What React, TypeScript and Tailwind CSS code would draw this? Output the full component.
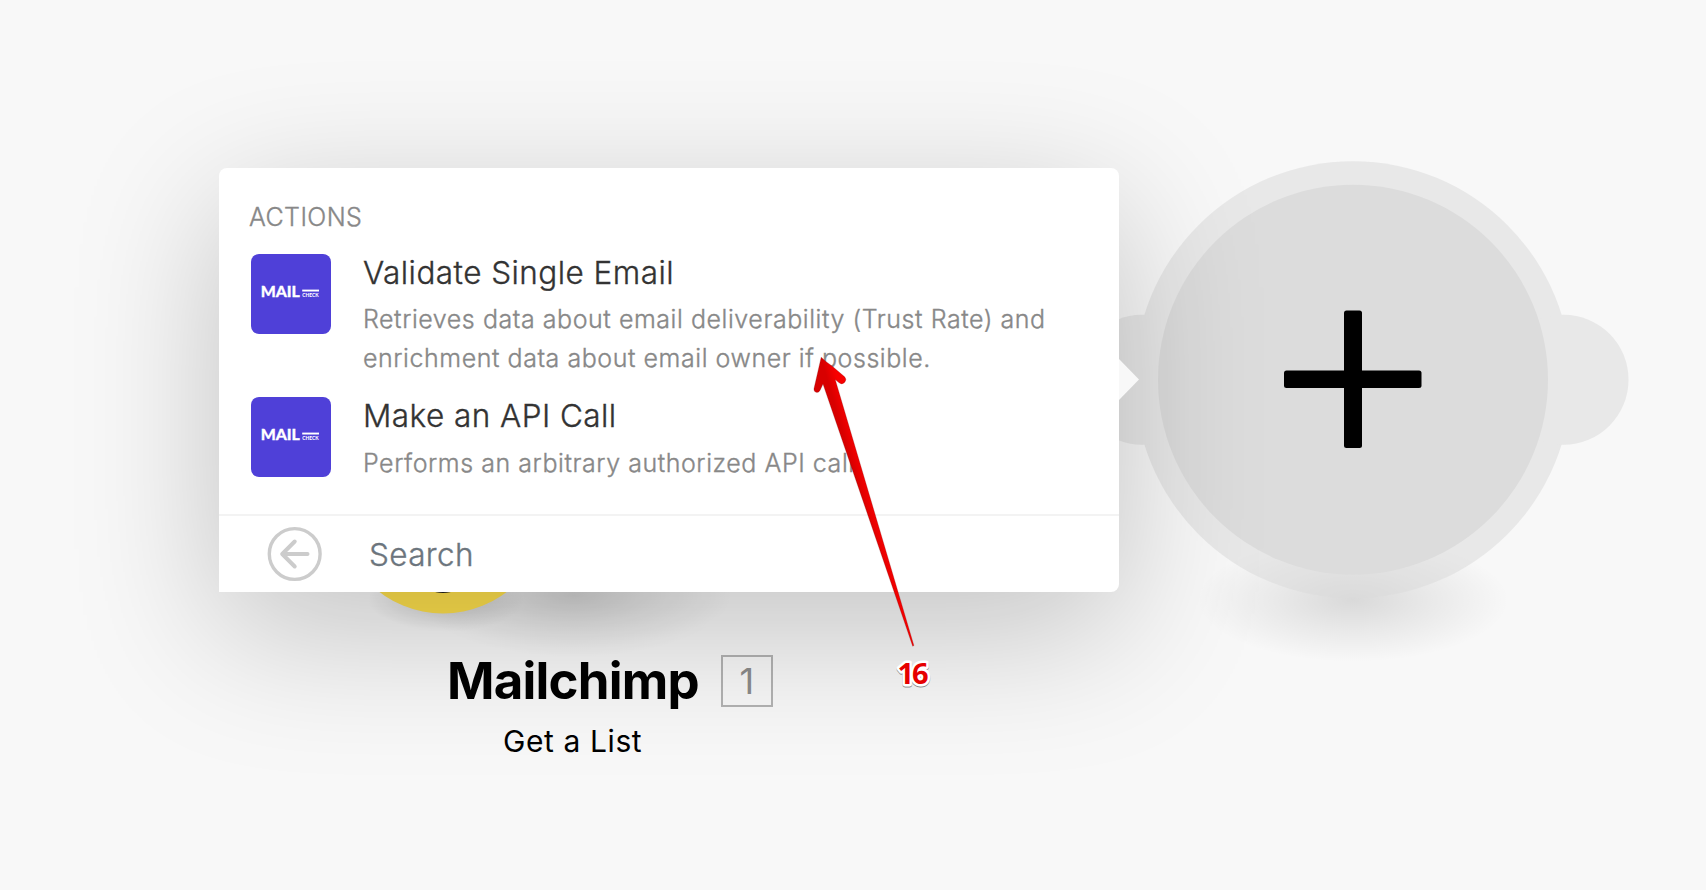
import React from "react";

function MailcheckLogo() {
  return (
    <div className="size-20 shrink-0 overflow-hidden rounded-lg bg-[#4f40d8]">
      <svg viewBox="0 0 80 80" className="size-20" fill="#fff">
        <text x="9.700" y="42.600" textLength="39.200" lengthAdjust="spacingAndGlyphs" stroke="#fff" strokeWidth="0.3" className="font-['Lato',sans-serif] text-[15.7px] font-black">MAIL</text>
        <rect x="51.2" y="35.6" width="16.8" height="1.9" />
        <text x="51.3" y="42.7" textLength="16.2" lengthAdjust="spacingAndGlyphs" className="font-['Lato',sans-serif] text-[5px] font-black">CHECK</text>
      </svg>
    </div>
  );
}

const actions = [
  {
    title: "Validate Single Email",
    lines: ["Retrieves data about email deliverability (Trust Rate) and", "enrichment data about email owner if possible."],
  },
  { title: "Make an API Call", lines: ["Performs an arbitrary authorized API call."] },
];

function AddNode() {
  return (
    <svg className="absolute left-[1060px] top-[140px]" width="600" height="540" viewBox="1060 140 600 540">
      <defs>
        <radialGradient id="addShadow">
          <stop offset="0" stopColor="#000" stopOpacity="0.125" />
          <stop offset="0.5" stopColor="#000" stopOpacity="0.06" />
          <stop offset="1" stopColor="#000" stopOpacity="0" />
        </radialGradient>
      </defs>
      <ellipse cx="1353" cy="600" rx="156" ry="62" fill="url(#addShadow)" />
      <g fill="#dbdbdb" opacity="0.55">
        <circle cx="1353" cy="379.7" r="218.5" />
        <circle cx="1142" cy="379.7" r="65" />
        <circle cx="1563.5" cy="379.7" r="65" />
      </g>
      <circle cx="1353" cy="379.7" r="195" fill="#dcdcdc" />
      <rect x="1284" y="370.5" width="137.5" height="17.5" rx="2.5" />
      <rect x="1344" y="310.5" width="18" height="137.5" rx="2.5" />
    </svg>
  );
}

function MailchimpNode() {
  return (
    <>
      <svg className="absolute left-[320px] top-[400px]" width="440" height="280" viewBox="320 400 440 280">
        <defs>
          <radialGradient id="nodeShadow">
            <stop offset="0" stopColor="#000" stopOpacity="0.15" />
            <stop offset="0.5" stopColor="#000" stopOpacity="0.07" />
            <stop offset="1" stopColor="#000" stopOpacity="0" />
          </radialGradient>
          <radialGradient id="badgeShadow">
            <stop offset="0" stopColor="#000" stopOpacity="0.17" />
            <stop offset="1" stopColor="#000" stopOpacity="0" />
          </radialGradient>
        </defs>
        <ellipse cx="574" cy="595" rx="158" ry="62" fill="url(#nodeShadow)" />
        <ellipse cx="446" cy="600" rx="78" ry="32" fill="url(#badgeShadow)" />
        <circle cx="443" cy="509" r="104.5" fill="#ffe14d" />
        <ellipse cx="443" cy="583" rx="18" ry="10" fill="#222" />
      </svg>
      <div className="absolute left-[447px] top-[649px] flex items-center gap-[22px]">
        <span className="text-[51px] font-bold leading-[64px] tracking-[-0.8px] text-black">Mailchimp</span>
        <span className="flex size-[52px] items-center justify-center border-2 border-[#b3b3b3] text-[36px] leading-none text-[#8c8c8c]">1</span>
      </div>
      <div className="absolute left-[503px] top-[720px] whitespace-nowrap text-[30px] leading-[42px] tracking-[0.6px] text-black">Get a List</div>
    </>
  );
}

function ActionPanel() {
  return (
    <section className="absolute left-[219px] top-[168px] flex h-[424px] w-[900px] flex-col rounded-lg rounded-bl-none bg-white font-light shadow-[0_38px_145px_rgba(0,0,0,0.22)] [-webkit-text-stroke-width:0.35px]">
      <div className="flex h-[346px] flex-col px-8">
        <h2 className="-ml-0.5 mt-8 h-[34px] text-[25px] leading-[34px] tracking-[0.4px] text-[#888]">ACTIONS</h2>
        <ul className="mt-5 flex flex-col gap-[19px]">
          {actions.map((a) => (
            <li key={a.title} className="group flex gap-8">
              <MailcheckLogo />
              <div className="whitespace-nowrap">
                <div className="h-[47px] text-[31.5px] leading-[38px] tracking-[0.45px] text-[#333] group-first:h-[46px]">{a.title}</div>
                {a.lines.map((l) => (
                  <div key={l} className="h-[39px] text-[25px] leading-[39px] tracking-[0.55px] text-[#888]">{l}</div>
                ))}
              </div>
            </li>
          ))}
        </ul>
      </div>
      <div className="flex flex-1 items-center border-t-2 border-[#f3f3f3] pl-12">
        <svg width="56" height="56" viewBox="0 0 56 56" fill="none" stroke="#ccc" strokeWidth="3.4">
          <circle cx="27.7" cy="28" r="25.4" />
          <path d="M40.5 28H15.500M27.700 15.500L15.200 28L27.700 40.500" strokeWidth="4" strokeLinecap="round" strokeLinejoin="round" />
        </svg>
        <span className="ml-[46px] mt-0.5 text-[31.5px] leading-[40px] tracking-[0.35px] text-[#6c757d]">Search</span>
      </div>
      <svg className="absolute left-[900px] top-[191px]" width="21" height="41" viewBox="0 0 21 41">
        <path d="M0 0L20 20.500L0 41Z" fill="#f8f8f8" />
      </svg>
    </section>
  );
}

function Callout() {
  return (
    <>
      <svg className="absolute left-[800px] top-[340px]" width="130" height="320" viewBox="800 340 130 320">
        <defs>
          <linearGradient id="arrowFill" gradientUnits="userSpaceOnUse" x1="856" y1="480" x2="870" y2="476">
            <stop offset="0" stopColor="#d80000" />
            <stop offset="0.7" stopColor="#f80000" />
          </linearGradient>
        </defs>
        <path
          d="M821.200 357.200Q826 362 832 366L844.600 376.800Q847 379.500 844.800 382.200Q842 385.400 838.800 382.600L835.200 379.500L913.900 645.500L912.700 646.200L823 384L820 390.500Q818.500 393 816 392.300Q813.500 391.500 814 388.500Z"
          fill="url(#arrowFill)" stroke="#7a1010" strokeOpacity="0.5" strokeWidth="0.5"
        />
      </svg>
      <svg className="absolute left-[885px] top-[650px]" width="60" height="48" viewBox="885 650 60 48">
        <g className="font-['Open_Sans',sans-serif] text-[29px] font-bold" strokeLinejoin="round">
          <text x="897.500" y="685" textLength="31" fill="#666" stroke="#666" strokeWidth="5" opacity="0.75">16</text>
          <text x="897.500" y="683.800" textLength="31" fill="#e60000" stroke="#fff" strokeWidth="5" paintOrder="stroke">16</text>
        </g>
      </svg>
    </>
  );
}

export default function App() {
  return (
    <main className="relative h-[890px] w-[1706px] overflow-hidden bg-[#f8f8f8] font-['Inter',sans-serif]">
      <AddNode />
      <MailchimpNode />
      <ActionPanel />
      <Callout />
    </main>
  );
}
